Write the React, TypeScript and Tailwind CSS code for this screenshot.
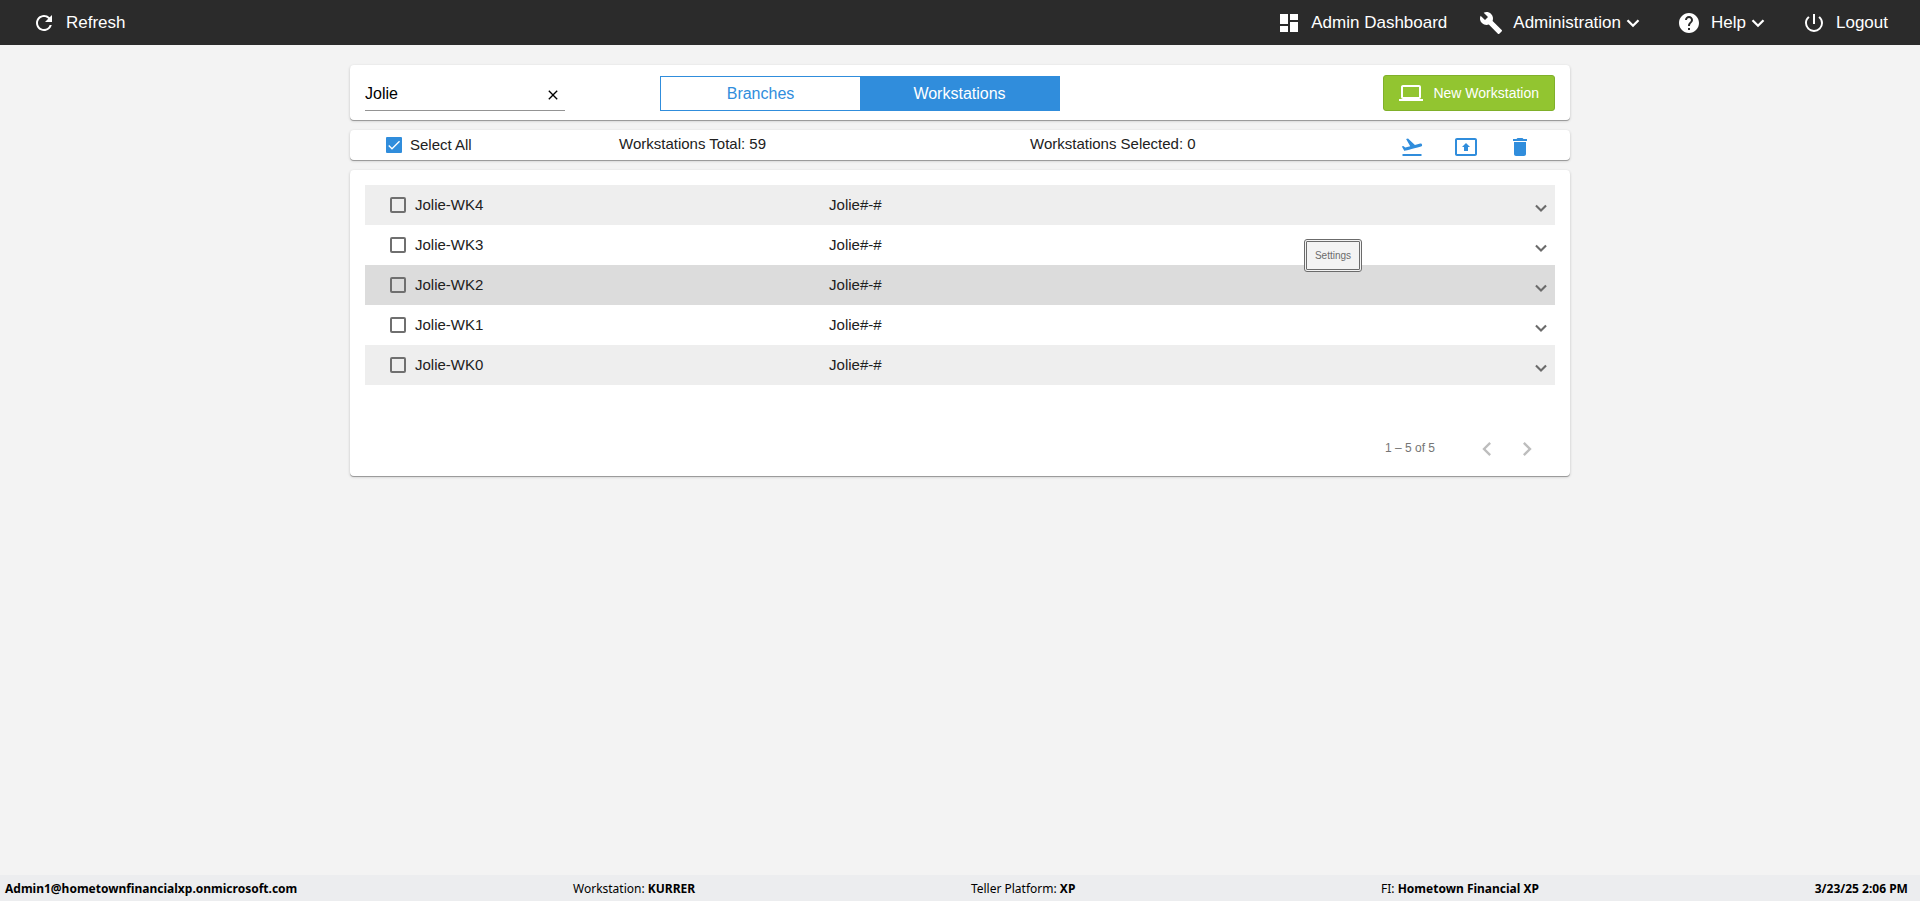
import * as React from "react";
import {
  MdBuild,
  MdChevronLeft,
  MdChevronRight,
  MdClose,
  MdDashboard,
  MdDelete,
  MdFlightTakeoff,
  MdHelp,
  MdLaptop,
  MdPowerSettingsNew,
  MdPresentToAll,
  MdRefresh,
} from "react-icons/md";

const WORKSTATIONS = [
  { name: "Jolie-WK4", branch: "Jolie#-#" },
  { name: "Jolie-WK3", branch: "Jolie#-#" },
  { name: "Jolie-WK2", branch: "Jolie#-#" },
  { name: "Jolie-WK1", branch: "Jolie#-#" },
  { name: "Jolie-WK0", branch: "Jolie#-#" },
];

const NAV_ITEMS = [
  { label: "Admin Dashboard", icon: MdDashboard, menu: false },
  { label: "Administration", icon: MdBuild, menu: true },
  { label: "Help", icon: MdHelp, menu: true },
  { label: "Logout", icon: MdPowerSettingsNew, menu: false },
];

function ChevronDown({ size }: { size: number }) {
  return (
    <svg width={size} height={size} viewBox="0 0 24 24" fill="none" stroke="currentColor" strokeWidth="2.3">
      <path d="M6.5 9.2 12 14.7 17.5 9.2" />
    </svg>
  );
}

function Card({ className, children }: { className: string; children: React.ReactNode }) {
  return (
    <section
      className={`w-full max-w-[1220px] rounded bg-white shadow-[0_1px_0_#9b9b9b,0_1px_3px_rgba(0,0,0,0.2)] ${className}`}
    >
      {children}
    </section>
  );
}

function TopBar() {
  return (
    <header className="flex h-[45px] items-center justify-between bg-[#2b2b2b] px-8 text-[17px] text-white">
      <button type="button" className="flex items-center gap-2.5">
        <MdRefresh size={24} />
        Refresh
      </button>
      <nav className="flex items-center gap-8">
        {NAV_ITEMS.map(({ label, icon: Icon, menu }) => (
          <button key={label} type="button" className="flex items-center gap-2.5">
            <Icon size={24} />
            <span className="flex items-center">
              {label}
              {menu && <ChevronDown size={24} />}
            </span>
          </button>
        ))}
      </nav>
    </header>
  );
}

function Toolbar() {
  return (
    <Card className="flex h-[55px] items-center justify-between px-[15px]">
      <div className="flex items-center gap-[95px] pt-0.5">
        <div className="flex h-[34px] w-[200px] items-center border-b border-[#949494] pt-0.5">
          <input
            type="text"
            aria-label="Search workstations"
            defaultValue="Jolie"
            className="min-w-0 flex-1 bg-transparent text-base text-black outline-none"
          />
          <button type="button" aria-label="Clear search" className="px-1 pt-0.5 text-black">
            <MdClose size={16} />
          </button>
        </div>
        <div className="flex h-[35px] w-[400px] border border-[#308ddc] text-base">
          <button type="button" className="flex-1 text-[#308ddc]">
            Branches
          </button>
          <button type="button" className="flex-1 bg-[#308ddc] text-white">
            Workstations
          </button>
        </div>
      </div>
      <button
        type="button"
        className="flex h-9 items-center gap-2.5 rounded-[3px] border border-[#80b02a] bg-[#92c530] px-[15px] text-sm text-white"
      >
        <MdLaptop size={24} />
        New Workstation
      </button>
    </Card>
  );
}

function SelectionBar() {
  return (
    <Card className="flex h-[30px] items-center pr-[38px] pl-9">
      <label className="flex flex-1 items-center gap-2">
        <span className="relative flex">
          <input
            type="checkbox"
            defaultChecked
            className="peer size-4 appearance-none rounded-[1px] border-2 border-[#757575] checked:border-[#308ddc] checked:bg-[#308ddc]"
          />
          <svg
            viewBox="0 0 24 24"
            className="pointer-events-none absolute inset-0 hidden size-4 peer-checked:block"
            fill="none"
            stroke="white"
            strokeWidth="2"
          >
            <path d="M4.1 12.7 9 17.6 20.3 6.3" />
          </svg>
        </span>
        Select All
      </label>
      <p className="w-[411px] pb-0.5">Workstations Total: 59</p>
      <p className="w-[370px] pb-0.5">Workstations Selected: 0</p>
      <div className="flex items-center gap-[30px] pt-1 text-[#308ddc]">
        <button type="button" aria-label="Release workstations">
          <MdFlightTakeoff size={24} />
        </button>
        <button type="button" aria-label="Export workstations">
          <MdPresentToAll size={24} />
        </button>
        <button type="button" aria-label="Delete workstations">
          <MdDelete size={24} />
        </button>
      </div>
    </Card>
  );
}

function WorkstationList() {
  return (
    <Card className="relative px-[15px] pt-[15px]">
      <table className="w-full table-fixed">
        <tbody>
          {WORKSTATIONS.map(({ name, branch }) => (
            <tr
              key={name}
              className="h-10 odd:bg-[#eeeeee] nth-3:bg-[#dcdcdc]"
            >
              <td className="w-[39%] pl-[25px]">
                <label className="flex items-center gap-[9px]">
                  <input
                    type="checkbox"
                    className="size-4 appearance-none rounded-[2px] border-2 border-[#6f6f6f]"
                  />
                  {name}
                </label>
              </td>
              <td>{branch}</td>
              <td className="w-10 pr-[3px]">
                <button type="button" aria-label={`Expand ${name}`} className="ml-auto flex pt-1.5 text-[#6b6b6b]">
                  <ChevronDown size={22} />
                </button>
              </td>
            </tr>
          ))}
        </tbody>
      </table>

      <div className="mt-[35px] flex h-14 items-center justify-end pr-2 text-xs text-[#757575]">
        <span className="mr-8">1 – 5 of 5</span>
        <button type="button" aria-label="Previous page" className="flex size-10 items-center justify-center pt-0.5 text-[#bdbdbd]">
          <MdChevronLeft size={28} />
        </button>
        <button type="button" aria-label="Next page" className="flex size-10 items-center justify-center pt-0.5 text-[#bdbdbd]">
          <MdChevronRight size={28} />
        </button>
      </div>

      {/* floats over the rows */}
      <button
        type="button"
        className="absolute top-[69px] right-[208px] h-[33px] w-[58px] rounded-[3px] border-3 border-double border-[#6b6b6b] bg-[#f3f3f3] text-[10px] text-[#6b6b6b]"
      >
        Settings
      </button>
    </Card>
  );
}

function StatusBar() {
  return (
    <footer className="flex h-[26px] items-center justify-between bg-[#ecedef] pt-0.5 pr-3 pl-[5px] font-['Noto_Sans',sans-serif] text-xs text-black">
      <b>Admin1@hometownfinancialxp.onmicrosoft.com</b>
      <span>
        Workstation: <b>KURRER</b>
      </span>
      <span className="pr-[30px]">
        Teller Platform: <b>XP</b>
      </span>
      <span>
        FI: <b>Hometown Financial XP</b>
      </span>
      <b>3/23/25 2:06 PM</b>
    </footer>
  );
}

export default function App() {
  return (
    <div className="flex min-h-screen flex-col bg-[#f3f3f3] font-['Liberation_Sans',Arial,sans-serif] text-[15px] text-[#212121]">
      <TopBar />
      <main className="flex flex-1 flex-col items-center gap-2.5 pt-5">
        <Toolbar />
        <SelectionBar />
        <WorkstationList />
      </main>
      <StatusBar />
    </div>
  );
}
